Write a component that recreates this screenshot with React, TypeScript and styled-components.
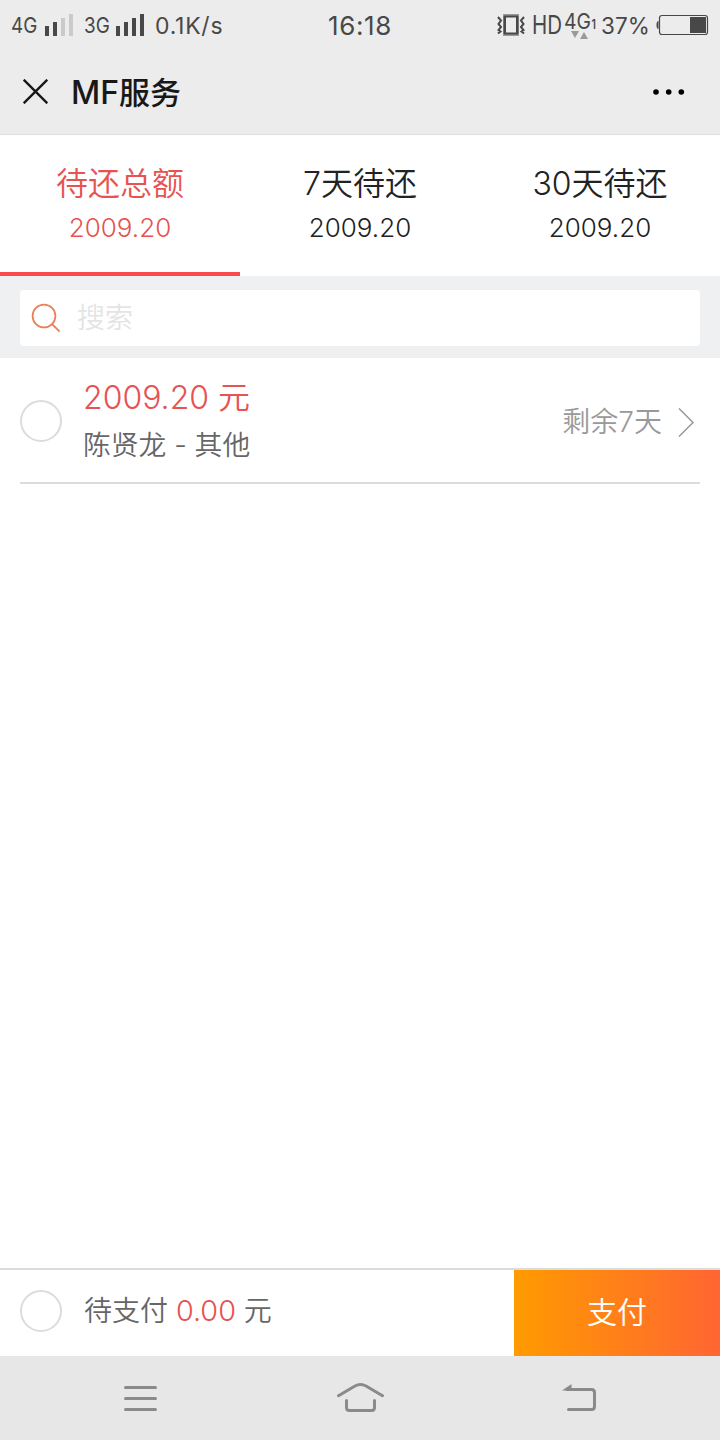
import React from 'react';
import styled, { createGlobalStyle, css } from 'styled-components';

const GlobalStyle = createGlobalStyle`
  * { box-sizing: border-box; }
  body {
    margin: 0;
    background: #fff;
    font-family: Inter, "Noto Sans CJK SC", sans-serif;
    font-weight: 350;
    font-feature-settings: "calt" 0;
  }
  svg { display: block; flex: none; }
`;

const RED = '#e65351';

const Screen = styled.div`
  width: 720px;
  height: 1440px;
  display: flex;
  flex-direction: column;
  background: #fff;
  overflow: hidden;
`;

const StatusBar = styled.div`
  height: 48px;
  display: grid;
  grid-template-columns: 328px 1fr auto;
  align-items: center;
  background: #ececec;
  color: #484848;
`;

const StatusGroup = styled.div`
  display: flex;
  align-items: center;
  height: 48px;
`;

const StatusText = styled.span<{ $size: number; $spacing?: number }>`
  font-size: ${(p) => p.$size}px;
  letter-spacing: ${(p) => p.$spacing ?? 0}px;
  line-height: 48px;
  padding-top: 2px;
  font-weight: 400;
  white-space: nowrap;
`;

const TitleBar = styled.header`
  height: 87px;
  display: flex;
  align-items: center;
  padding: 1px 35px 0 23px;
  background: #ececec;
  border-bottom: 1px solid #dfdfdf;
`;

const Title = styled.h1`
  flex: 1;
  margin: 0 0 0 23px;
  font-size: 31px;
  line-height: 48px;
  padding-top: 2px;
  font-weight: 500;
  color: #181818;
`;

const TitleLatin = styled.span`
  font-size: 32px;
  font-weight: 450;
`;

const Tabs = styled.nav`
  height: 141px;
  display: grid;
  grid-template-columns: repeat(3, 1fr);
`;

const Tab = styled.div<{ $active?: boolean }>`
  display: flex;
  flex-direction: column;
  align-items: center;
  padding-top: 26px;
  color: #222;
  ${(p) =>
    p.$active &&
    css`
      color: ${RED};
      border-bottom: 4px solid #f84c4c;
    `}
`;

const TabLabel = styled.span`
  font-size: 32px;
  line-height: 46px;
  white-space: nowrap;
`;

const TabValue = styled.span`
  font-size: 26px;
  line-height: 42px;
  font-weight: 300;
`;

const SearchArea = styled.div`
  height: 82px;
  padding: 14px 20px 12px;
  background: #eff0f2;
`;

const SearchBox = styled.div`
  height: 56px;
  display: flex;
  align-items: center;
  gap: 16px;
  padding-left: 11px;
  border-radius: 4px;
  background: #fff;
`;

const Placeholder = styled.span`
  font-size: 28px;
  line-height: 52px;
  color: #e4e4e4;
`;

const List = styled.main`
  flex: 1;
  padding: 0 20px;
`;

const DebtRow = styled.div`
  height: 126px;
  display: flex;
  align-items: center;
  padding-top: 2px;
  border-bottom: 2px solid #dcdcdc;
`;

const Radio = styled.span`
  width: 42px;
  height: 42px;
  flex: none;
  border: 2px solid #dcdcdc;
  border-radius: 50%;
`;

const DebtInfo = styled.div`
  flex: 1;
  display: flex;
  flex-direction: column;
  margin-left: 21px;
`;

const Amount = styled.span`
  font-size: 32px;
  line-height: 48px;
  color: ${RED};
`;

const Debtor = styled.span`
  font-size: 27.8px;
  line-height: 46px;
  color: #666;
`;

const Remaining = styled.span`
  margin-right: 16px;
  padding-top: 1px;
  font-size: 28px;
  line-height: 48px;
  color: #999;
`;

const Chevron = styled.svg`
  margin-top: 1px;
`;

const PayBar = styled.footer`
  height: 88px;
  display: flex;
  align-items: stretch;
  border-top: 2px solid #dcdcdc;
`;

const PaySummary = styled.div`
  flex: 1;
  display: flex;
  align-items: center;
  padding: 0 0 4px 20px;
`;

const PayText = styled.span`
  margin-left: 22px;
  font-size: 28px;
  line-height: 48px;
  color: #666;
  white-space: pre;
  em { font-style: normal; font-size: 28.8px; color: ${RED}; }
`;

const PayButton = styled.button`
  width: 206px;
  padding: 0 0 6px;
  border: 0;
  color: #fff;
  font: inherit;
  font-size: 30px;
  background: linear-gradient(90deg, #ff9b00, #ff6532);
`;

const SystemNav = styled.div`
  height: 84px;
  display: flex;
  align-items: center;
  background: #e7e7e7;
  padding-left: 124px;
`;

const NavIcon = styled.svg<{ $gap?: number }>`
  margin-left: ${(p) => p.$gap ?? 0}px;
  fill: none;
  stroke: #8a8a8a;
  stroke-width: 3;
  stroke-linecap: round;
  stroke-linejoin: round;
`;

const SignalIcon = styled.svg`
  margin: 0 10px 0 5px;
`;

const Signal = ({ level }: { level: number }) => (
  <SignalIcon width="28" height="48">
    {[10, 14, 18, 22].map((h, i) => (
      <rect key={h} x={i * 8} y={35 - h} width="4" height={h} fill={i < level ? '#484848' : '#cacaca'} />
    ))}
  </SignalIcon>
);

const NetworkLabel = ({ text, width }: { text: string; width: number }) => (
  <svg width={width} height="48">
    <text transform="translate(1 32) scale(.86 1)" fontFamily="Inter" fontSize="22" fontWeight="400" fill="#484848">{text}</text>
  </svg>
);

const StatusIcons = () => (
  <svg width="106" height="48" viewBox="495 0 106 48">
    <g fill="none" stroke="#484848">
      <path d="M504.500 14V34M517.500 14V34" stroke="#777" strokeWidth="3" />
      <path d="M503 14H519M503 34H519" stroke="#999" strokeWidth="2" />
      <path d="M505 15.500H517V32.500H505Z" strokeWidth="2" />
      <path d="M498 16l3 3.500-2.500 3.500 2.500 3-2.500 3 2 1.500-2.500 2M524 16l-3 3.500 2.500 3.500-2.500 3 2.500 3-2 1.500 2.500 2" strokeWidth="2" />
    </g>
    <g fontFamily="Inter" fill="#484848">
      <text transform="translate(532 33) scale(.79 1)" fontSize="26" fontWeight="400">HD</text>
      <text transform="translate(564 28) scale(.88 1)" fontSize="22" fontWeight="400">4G</text>
      <text transform="translate(591.500 28) scale(.8 1)" fontSize="13" fontWeight="600">1</text>
    </g>
    <path d="M571 30H579L575 37ZM580 38H588L584 31Z" fill="#999" />
  </svg>
);

const Battery = () => (
  <svg width="64" height="48" viewBox="656 0 64 48">
    <path d="M658.500 20Q656.500 20 656.500 24T658.500 28Z" fill="#484848" />
    <rect x="659.500" y="14.500" width="48" height="19" rx="2.500" fill="none" stroke="#484848" strokeWidth="1.200" />
    <rect x="690" y="16" width="16" height="16" fill="#484848" />
  </svg>
);

const tabs = [
  { label: '待还总额', value: '2009.20', active: true },
  { label: '7天待还', value: '2009.20' },
  { label: '30天待还', value: '2009.20' },
];

const LeftStatus = styled(StatusGroup)`
  padding-left: 10px;
`;

const NetworkSpeed = styled(StatusText)`
  margin-left: 1px;
`;

const BatteryPercent = styled(StatusText)`
  width: 55px;
`;

export default function App() {
  return (
    <Screen>
      <GlobalStyle />
      <StatusBar>
        <LeftStatus>
          <NetworkLabel text="4G" width={30} />
          <Signal level={2} />
          <NetworkLabel text="3G" width={28} />
          <Signal level={4} />
          <NetworkSpeed $size={23} $spacing={0.75}>0.1K/s</NetworkSpeed>
        </LeftStatus>
        <StatusText $size={26} $spacing={0.6}>16:18</StatusText>
        <StatusGroup>
          <StatusIcons />
          <BatteryPercent $size={22.5}>37%</BatteryPercent>
          <Battery />
        </StatusGroup>
      </StatusBar>
      <TitleBar>
        <svg width="25" height="25" viewBox="0 0 25 25">
          <path d="M.7.7L24.300 24.300M24.300.7L.7 24.300" stroke="#181818" strokeWidth="2.400" />
        </svg>
        <Title><TitleLatin>MF</TitleLatin>服务</Title>
        <svg width="32" height="6" viewBox="0 0 32 6">
          <circle cx="3" cy="3" r="2.800" />
          <circle cx="15.700" cy="3" r="2.800" />
          <circle cx="28.300" cy="3" r="2.800" />
        </svg>
      </TitleBar>
      <Tabs>
        {tabs.map((t) => (
          <Tab key={t.label} $active={t.active}>
            <TabLabel>{t.label}</TabLabel>
            <TabValue>{t.value}</TabValue>
          </Tab>
        ))}
      </Tabs>
      <SearchArea>
        <SearchBox>
          <svg width="30" height="30" viewBox="0 0 30 30" fill="none" stroke="#ec7f58" strokeWidth="1.800">
            <circle cx="13" cy="13" r="11.400" />
            <path d="M21 21L28.600 28.600" />
          </svg>
          <Placeholder>搜索</Placeholder>
        </SearchBox>
      </SearchArea>
      <List>
        <DebtRow>
          <Radio />
          <DebtInfo>
            <Amount>2009.20 元</Amount>
            <Debtor>陈贤龙 - 其他</Debtor>
          </DebtInfo>
          <Remaining>剩余7天</Remaining>
          <Chevron width="22" height="30" viewBox="0 0 22 30" fill="none" stroke="#999" strokeWidth="1.500">
            <path d="M1 1.500L15 15.500L1 29.500" />
          </Chevron>
        </DebtRow>
      </List>
      <PayBar>
        <PaySummary>
          <Radio />
          <PayText>待支付 <em>0.00</em> 元</PayText>
        </PaySummary>
        <PayButton>支付</PayButton>
      </PayBar>
      <SystemNav>
        <NavIcon width="33" height="30" viewBox="0 0 33 30">
          <path d="M1.500 4.500H31.500M1.500 15.500H31.500M1.500 26.500H31.500" />
        </NavIcon>
        <NavIcon $gap={180} width="47" height="32" viewBox="0 0 47 32">
          <path d="M1.500 13.700L18 4Q23.500 1 29 4L45.500 13.700M9.500 18.500V25.500Q9.500 28.500 12.500 28.500H34.500Q37.500 28.500 37.500 25.500V18.500" />
        </NavIcon>
        <NavIcon $gap={178} width="34" height="32" viewBox="0 0 34 32">
          <path d="M5 7.500H29.500Q32.500 7.500 32.500 10.500V24.500Q32.500 27.500 29.500 27.500H6.500" />
          <path d="M0 8.500L9.500 2V8.500Z" fill="#8a8a8a" stroke="none" />
        </NavIcon>
      </SystemNav>
    </Screen>
  );
}
